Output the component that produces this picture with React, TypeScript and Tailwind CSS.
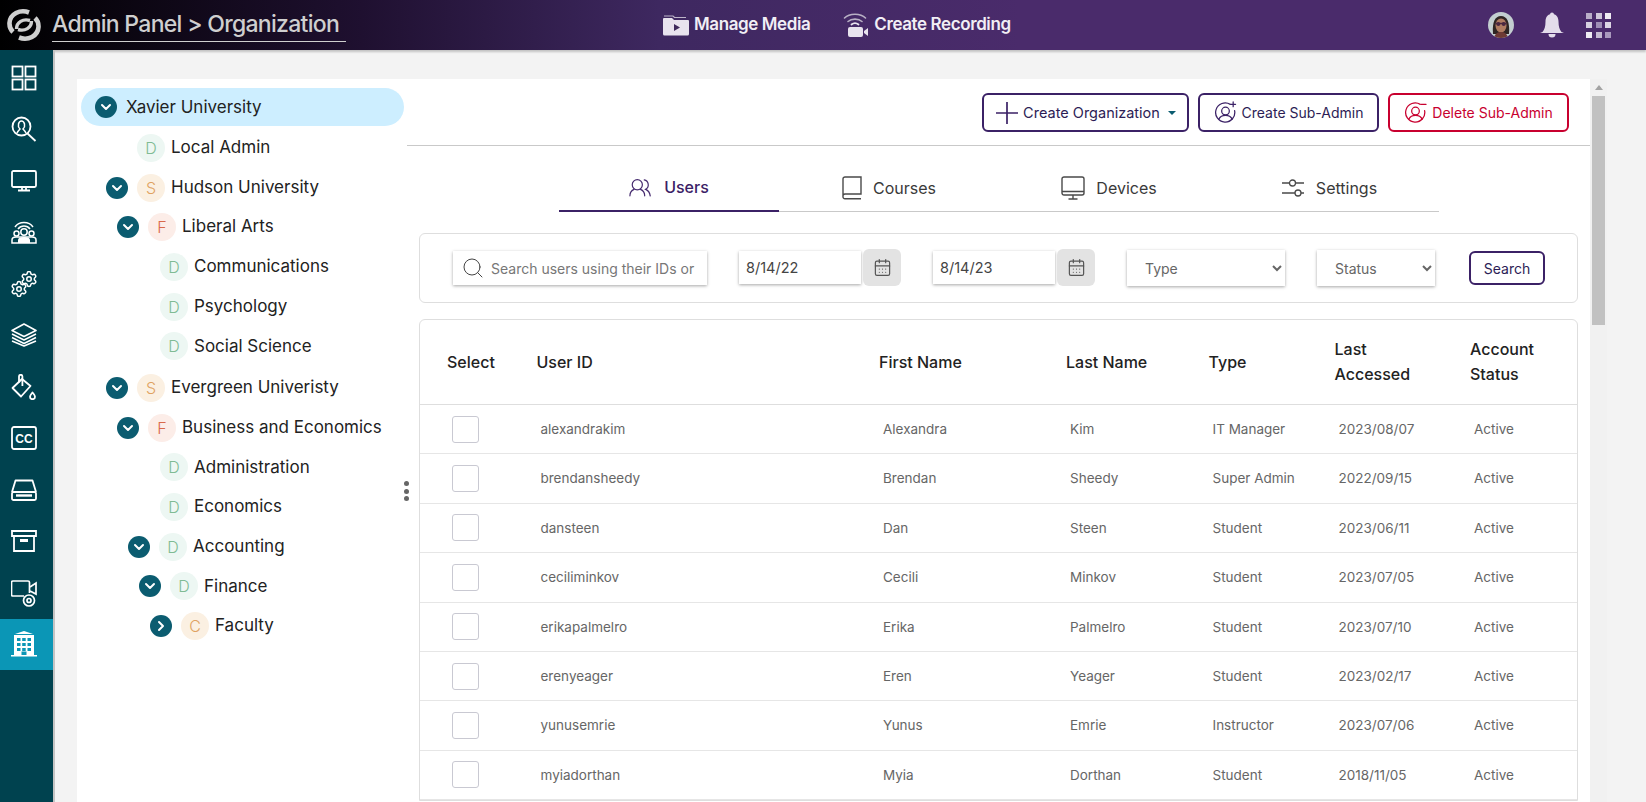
import { CalendarDays, ChevronDown, ChevronRight, Search, Settings } from "lucide-react";

const FONT = "font-['Inter','Liberation_Sans',sans-serif]";

type TreeRow = {
  label: string;
  letter: string;
  pad: string;
  toggle?: "down" | "right";
  extra?: string;
};

const TREE: TreeRow[] = [
  { label: "Local Admin", letter: "D", pad: "pl-[60px]" },
  { label: "Hudson University", letter: "S", pad: "pl-[29px]", toggle: "down" },
  { label: "Liberal Arts", letter: "F", pad: "pl-[40px]", toggle: "down" },
  { label: "Communications", letter: "D", pad: "pl-[83px]" },
  { label: "Psychology", letter: "D", pad: "pl-[83px]" },
  { label: "Social Science", letter: "D", pad: "pl-[83px]" },
  { label: "Evergreen Univeristy", letter: "S", pad: "pl-[29px]", toggle: "down", extra: "mt-[2px]" },
  { label: "Business and Economics", letter: "F", pad: "pl-[40px]", toggle: "down" },
  { label: "Administration", letter: "D", pad: "pl-[83px]" },
  { label: "Economics", letter: "D", pad: "pl-[83px]" },
  { label: "Accounting", letter: "D", pad: "pl-[51px]", toggle: "down" },
  { label: "Finance", letter: "D", pad: "pl-[62px]", toggle: "down" },
  { label: "Faculty", letter: "C", pad: "pl-[73px]", toggle: "right" },
];

const AVATAR_COLORS: Record<string, string> = {
  D: "bg-[#edf7f3] text-[#7fbb94]",
  S: "bg-[#fbf0e2] text-[#e0a261]",
  F: "bg-[#fcede8] text-[#d9694a]",
  C: "bg-[#fbf0e2] text-[#e0a261]",
};

const USERS = [
  ["alexandrakim", "Alexandra", "Kim", "IT Manager", "2023/08/07"],
  ["brendansheedy", "Brendan", "Sheedy", "Super Admin", "2022/09/15"],
  ["dansteen", "Dan", "Steen", "Student", "2023/06/11"],
  ["ceciliminkov", "Cecili", "Minkov", "Student", "2023/07/05"],
  ["erikapalmelro", "Erika", "Palmelro", "Student", "2023/07/10"],
  ["erenyeager", "Eren", "Yeager", "Student", "2023/02/17"],
  ["yunusemrie", "Yunus", "Emrie", "Instructor", "2023/07/06"],
  ["myiadorthan", "Myia", "Dorthan", "Student", "2018/11/05"],
];

const GRID_COLS = "grid grid-cols-[89.5px_342.5px_187px_142.5px_126px_135.5px_1fr] pl-[27px]";

function Toggle({ dir }: { dir: "down" | "right" }) {
  return (
    <span className="flex h-[22px] w-[22px] shrink-0 items-center justify-center rounded-full bg-[#0b5c70] text-white">
      {dir === "down" ? (
        <ChevronDown className="h-4 w-4" strokeWidth={3} />
      ) : (
        <ChevronRight className="h-4 w-4" strokeWidth={3} />
      )}
    </span>
  );
}

function Logo() {
  return (
    <svg viewBox="0 0 34 34" className="h-[34px] w-[34px]" fill="none" stroke="#cfcfcf" strokeLinecap="butt">
      <path d="M22 4.500C13 1 3 6 2.500 15C2.300 19 3.800 22 6 24" strokeWidth="4.600" />
      <path d="M12 29.500C21 33 31 28 31.500 19C31.700 15 30.200 12 28 10" strokeWidth="4.600" />
      <path d="M9.500 21C9.500 14 16 10.500 23 12.500" strokeWidth="3.400" />
      <path d="M24.500 13C24.500 20 18 23.500 11 21.500" strokeWidth="3.400" />
    </svg>
  );
}

function MediaIcon() {
  return (
    <svg viewBox="0 0 28 24" className="h-6 w-7">
      <path d="M2 3h9l1.500 1.500H24" fill="none" stroke="#bdb5c9" strokeWidth="1.200" />
      <path d="M1 6a1 1 0 0 1 1-1h8l2 2h14a1 1 0 0 1 1 1v13a1.500 1.500 0 0 1-1.500 1.500h-23A1.500 1.500 0 0 1 1 21z" fill="#e8e3ee" />
      <path d="M12 11l6 3.500-6 3.500z" fill="#3f2a5c" />
    </svg>
  );
}

function RecordIcon() {
  return (
    <svg viewBox="0 0 26 26" className="h-[26px] w-[26px]">
      <g fill="none" stroke="#b9b1c5" strokeWidth="1.600" strokeLinecap="round">
        <path d="M1.500 6C6.500 1 17.500 1 22.500 6" />
        <path d="M5 9.500c3.500-3.200 10.500-3.200 14 0" />
      </g>
      <path d="M8.500 12.500c2-1.500 5-1.500 7 0" fill="none" stroke="#e8e3ee" strokeWidth="1.800" strokeLinecap="round" />
      <rect x="5" y="15" width="15" height="10" rx="2" fill="#e8e3ee" />
      <path d="M21 19l4-3v8l-4-3z" fill="#e8e3ee" />
    </svg>
  );
}

function Portrait() {
  return (
    <svg viewBox="0 0 26 26" className="h-[26px] w-[26px] rounded-full">
      <rect width="26" height="26" fill="#c3ced0" />
      <path d="M5 22c-1-12 2-18 8-18s9 6 8 18z" fill="#2f2523" />
      <ellipse cx="13" cy="13.500" rx="5.500" ry="7" fill="#b07c62" />
      <path d="M6 26c1-5 4-6 7-6s6 1 7 6z" fill="#6e3a34" />
      <path d="M7.500 11.500h11" stroke="#4a2740" strokeWidth="1.300" />
      <circle cx="10.300" cy="12" r="2" fill="#4a2740" />
      <circle cx="15.700" cy="12" r="2" fill="#4a2740" />
    </svg>
  );
}

function Bell() {
  return (
    <svg viewBox="0 0 26 26" className="h-[26px] w-[26px]" fill="#e3dcea">
      <circle cx="13" cy="2.500" r="2" />
      <path d="M13 2c-4.500 0-6.500 3.500-6.500 7.500 0 5-1 8-3 10.500L1 21h24l-2.500-1c-2-2.500-3-5.500-3-10.500C19.500 5.500 17.500 2 13 2z" />
      <path d="M9.500 22h7a3.500 3.500 0 0 1-7 0z" />
    </svg>
  );
}

function AppsGrid() {
  const shades = ["bg-[#b9aec8]", "bg-[#cfc7da]", "bg-[#efecf3]", "bg-[#d7d1e0]", "bg-[#9f8fb5]", "bg-[#dcd6e4]", "bg-[#efecf3]", "bg-[#c5bbd2]", "bg-[#a999bd]"];
  return (
    <div className="grid grid-cols-3 gap-[3.500px]">
      {shades.map((s, i) => (
        <span key={i} className={`h-[6px] w-[6px] ${s}`} />
      ))}
    </div>
  );
}

function SideIcon({ index }: { index: number }) {
  const common = { fill: "none", stroke: "#fff", strokeWidth: 1.8 };
  switch (index) {
    case 0:
      return (
        <svg viewBox="0 0 26 26" className="h-[26px] w-[26px]" {...common}>
          <rect x="1.500" y="1.500" width="10" height="10" />
          <rect x="14.500" y="1.500" width="10" height="10" />
          <rect x="1.500" y="14.500" width="10" height="10" />
          <rect x="14.500" y="14.500" width="10" height="10" />
        </svg>
      );
    case 1:
      return (
        <svg viewBox="0 0 26 26" className="h-[26px] w-[26px]" {...common}>
          <circle cx="10.500" cy="10.500" r="9" />
          <path d="M16.500 17.500l8 7.500" />
          <path d="M6 17c1-2 2-3 3-4-1.500-1.500-2-3-1.500-5 .5-2 1.500-3 3-3s2.500 1 3 3c.5 2 0 3.500-1.500 5 1 1 2 2 3 4" strokeWidth="1.500" />
        </svg>
      );
    case 2:
      return (
        <svg viewBox="0 0 26 22" className="h-[22px] w-[26px]" {...common}>
          <rect x="1" y="1" width="24" height="16" rx="1.500" />
          <path d="M11 17v3M15 17v3M7 20.500h12" />
        </svg>
      );
    case 3:
      return (
        <svg viewBox="0 0 26 26" className="h-[26px] w-[26px]">
          <g fill="none" stroke="#fff" strokeWidth="1.500">
            <path d="M4 8c4-6 14-6 18 0" />
            <path d="M7 10c3-4 9-4 12 0" />
          </g>
          <circle cx="13" cy="13" r="3.200" fill="none" stroke="#fff" strokeWidth="1.500" />
          <circle cx="5.500" cy="14.500" r="2.500" fill="none" stroke="#fff" strokeWidth="1.500" />
          <circle cx="20.500" cy="14.500" r="2.500" fill="none" stroke="#fff" strokeWidth="1.500" />
          <path d="M1 24v-3c0-2 1.500-3 4-3h16c2.500 0 4 1 4 3v3z" fill="none" stroke="#fff" strokeWidth="1.500" />
          <path d="M7 24v-3c0-2 2-3 6-3s6 1 6 3v3z" fill="#fff" />
        </svg>
      );
    case 4:
      return (
        <svg viewBox="0 0 26 26" className="h-[26px] w-[26px]">
          <Settings x={9} y={-1} width={18} height={18} stroke="#fff" strokeWidth={2} />
          <Settings x={-1} y={9} width={18} height={18} stroke="#fff" strokeWidth={2} />
        </svg>
      );
    case 5:
      return (
        <svg viewBox="0 0 26 24" className="h-[24px] w-[26px]" fill="none" stroke="#fff" strokeWidth="1.600" strokeLinejoin="round">
          <path d="M13 1L25 7.500 13 13.500 1 7.500z" />
          <path d="M1 11l12 6 12-6M1 14.500l12 6 12-6M1 18l12 5 12-5" />
        </svg>
      );
    case 6:
      return (
        <svg viewBox="0 0 26 26" className="h-[26px] w-[26px]" fill="none" stroke="#fff" strokeWidth="1.800" strokeLinejoin="round">
          <path d="M11 5L1.500 14l8.500 8.500L19.500 12z" />
          <path d="M8 8.500V2.500a1.700 1.700 0 0 1 3.400 0V12" />
          <path d="M21.500 18.500c-1.500 2-2.500 3-2.500 4.200a2.500 2.500 0 0 0 5 0c0-1.200-1-2.200-2.500-4.200z" />
        </svg>
      );
    case 7:
      return (
        <svg viewBox="0 0 26 24" className="h-[24px] w-[26px]">
          <rect x="1" y="1" width="24" height="22" rx="2" fill="none" stroke="#fff" strokeWidth="1.800" />
          <text x="13" y="16.500" textAnchor="middle" fontSize="12" fontWeight="800" fill="#fff" fontFamily="Liberation Sans, sans-serif">CC</text>
        </svg>
      );
    case 8:
      return (
        <svg viewBox="0 0 26 22" className="h-[22px] w-[26px]" fill="none" stroke="#fff" strokeWidth="1.800" strokeLinejoin="round">
          <path d="M1 13L4.500 1.500h17L25 13" />
          <rect x="1" y="13" width="24" height="8" rx="1.500" />
          <path d="M5 16.500h16" strokeWidth="2.400" />
        </svg>
      );
    case 9:
      return (
        <svg viewBox="0 0 26 22" className="h-[22px] w-[26px]" fill="none" stroke="#fff" strokeWidth="1.800">
          <path d="M1 1h24v5H1zM3 6v15h20V6" />
          <path d="M9 10.500h8" strokeWidth="3" />
        </svg>
      );
    case 10:
      return (
        <svg viewBox="0 0 26 28" className="h-[28px] w-[26px]" fill="none" stroke="#fff" strokeWidth="1.700">
          <path d="M13 17H2a1.500 1.500 0 0 1-1.500-1.500v-12A1.500 1.500 0 0 1 2 2h15a1.500 1.500 0 0 1 1.500 1.500V14" />
          <path d="M19 8l6-4v11l-6-3" />
          <circle cx="18" cy="21.500" r="5.500" />
          <circle cx="18" cy="21.500" r="2" />
        </svg>
      );
    default:
      return (
        <svg viewBox="0 0 26 26" className="h-[26px] w-[26px]" fill="#fff">
          <path d="M13 0l9 3H4z" />
          <rect x="3" y="4" width="20" height="20" />
          <rect y="24" width="26" height="1.500" />
          <g fill="#0b96b6">
            {[7, 12, 17].map((y) =>
              [6, 11.2, 16.5].map((x) => <rect key={`${x}-${y}`} x={x} y={y} width="3.500" height="3" />)
            )}
            <rect x="10.500" y="20.500" width="5" height="3.500" />
          </g>
        </svg>
      );
  }
}

function PersonIcon({ color, sign }: { color: string; sign: "plus" | "minus" }) {
  return (
    <svg viewBox="0 0 24 24" className="h-[23px] w-[23px]" fill="none" stroke={color} strokeWidth="1.300" strokeLinecap="round">
      <path d="M17 3.500A10 10 0 1 0 21.500 10" />
      <circle cx="12" cy="10.500" r="4" />
      <path d="M5 19c1.500-3 4-4 7-4s5.500 1 7 4" />
      {sign === "plus" ? <path d="M20 1v5M17.500 3.500h5" /> : <path d="M18 3.500h5" />}
    </svg>
  );
}

function TabIcon({ index }: { index: number }) {
  if (index === 0) {
    return (
      <svg viewBox="0 0 26 20" className="h-[19px] w-[24px]" fill="none" stroke="#452a6e" strokeWidth="1.300" strokeLinecap="round">
        <circle cx="9" cy="7" r="5.500" />
        <path d="M1 19c0-3.500 2-6 4.500-7M17 19c0-3.500-2-6-4.500-7" />
        <path d="M16.500 1.800a5.500 5.500 0 0 1 1.500 10.200c2.500 1 4.500 3.500 5 7" />
      </svg>
    );
  }
  if (index === 1) {
    return (
      <svg viewBox="0 0 20 24" className="h-6 w-5" fill="none" stroke="#4a4a4a" strokeWidth="1.400">
        <path d="M1 21V3a2 2 0 0 1 2-2h16v17H3a2 2 0 0 0-2 2.500A2 2 0 0 0 3 22.800h16" />
      </svg>
    );
  }
  if (index === 2) {
    return (
      <svg viewBox="0 0 24 24" className="h-6 w-6" fill="none" stroke="#4a4a4a" strokeWidth="1.400">
        <rect x="1" y="1" width="22" height="18" rx="2" />
        <path d="M1 15.500h22M12 19v3.500M7.500 23h9" />
      </svg>
    );
  }
  return (
    <svg viewBox="0 0 24 20" className="h-5 w-6" fill="none" stroke="#4a4a4a" strokeWidth="1.300">
      <path d="M1 5h7M15 5h8M1 15h13M20 15h3" />
      <circle cx="11.500" cy="5" r="3" />
      <circle cx="17" cy="15" r="3" />
    </svg>
  );
}

const TABS = [
  { label: "Users", active: true },
  { label: "Courses" },
  { label: "Devices" },
  { label: "Settings" },
];

function DateField({ value }: { value: string }) {
  return (
    <div className="-mt-[2px] flex items-center gap-[2px]">
      <input
        readOnly
        value={value}
        className="h-[33px] w-[122px] bg-white pl-[7px] text-[14.5px] text-[#444] shadow-[0_1px_3px_rgba(0,0,0,0.35)] outline-none"
      />
      <span className="flex h-[37px] w-[38px] items-center justify-center rounded-md bg-[#e3e3e3]">
        <CalendarDays className="h-[19px] w-[19px] text-[#555]" strokeWidth={1.5} />
      </span>
    </div>
  );
}

export default function App() {
  return (
    <div className={`flex h-screen flex-col overflow-hidden bg-[#f3f3f3] ${FONT}`}>
      <header className="flex h-[50px] shrink-0 items-center bg-[linear-gradient(90deg,#000_0%,#1f1030_22%,#3e2860_40%,#4a2b6b_62%,#4a2b6b_100%)] shadow-[0_2px_2px_rgba(0,0,0,0.2)]">
        <div className="flex w-[662px] shrink-0 items-center pl-[7px]">
          <Logo />
          <span className="ml-[11px] whitespace-nowrap border-b border-[#cfcfcf] pr-[7px] text-[23px] leading-[33px] font-medium tracking-[-0.7px] text-[#cfcfcf]">
            Admin Panel &gt; Organization
          </span>
        </div>
        <div className="flex items-center">
          <MediaIcon />
          <span className="ml-[4px] text-[17px] font-semibold tracking-[-0.4px] text-[#f1eef5]">Manage Media</span>
          <span className="ml-[33px]"><RecordIcon /></span>
          <span className="ml-[5px] text-[17px] font-semibold tracking-[-0.4px] text-[#f1eef5]">Create Recording</span>
        </div>
        <div className="ml-auto flex items-center pr-[35px]">
          <Portrait />
          <span className="ml-[25px]"><Bell /></span>
          <span className="ml-[21px]"><AppsGrid /></span>
        </div>
      </header>

      <div className="flex min-h-0 flex-1">
        <nav className="flex w-[55px] shrink-0 flex-col border-r-2 border-[#c4c4c4] bg-[#00424f] pt-[2px]">
          {Array.from({ length: 12 }).map((_, i) => (
            <div
              key={i}
              className={`flex h-[51.500px] shrink-0 items-center justify-center pr-[6px] ${i === 11 ? "bg-[#0b96b6]" : ""}`}
            >
              <SideIcon index={i} />
            </div>
          ))}
        </nav>

        <main className="flex min-w-0 flex-1 pt-[29px] pl-[22px]">
          <div className="flex w-[1513px] shrink-0 bg-white">
            <aside className="relative w-[330px] shrink-0 pt-[9px]">
              <div className="mr-[3px] ml-[4px] flex h-[38px] items-center gap-[9px] rounded-full bg-[#cdeeff] pl-[14px] text-[17px] text-[#222]">
                <Toggle dir="down" />
                <span className="pt-[2px]">Xavier University</span>
              </div>
              <div className="mt-[2px]">
                {TREE.map((row) => (
                  <div key={row.label} className={`flex h-[39.700px] items-center whitespace-nowrap ${row.pad} ${row.extra ?? ""}`}>
                    {row.toggle && (
                      <span className="mr-[9px]">
                        <Toggle dir={row.toggle} />
                      </span>
                    )}
                    <span className={`flex h-[28px] w-[28px] shrink-0 items-center justify-center rounded-full text-[16px] font-light ${AVATAR_COLORS[row.letter]}`}>
                      {row.letter}
                    </span>
                    <span className="ml-[6px] text-[17px] text-[#222]">{row.label}</span>
                  </div>
                ))}
              </div>
              <div className="absolute top-[402px] right-[-2px] flex flex-col gap-[2.500px]">
                <span className="h-[5px] w-[5px] rounded-full bg-[#666]" />
                <span className="h-[5px] w-[5px] rounded-full bg-[#666]" />
                <span className="h-[5px] w-[5px] rounded-full bg-[#666]" />
              </div>
            </aside>

            <section className="min-w-0 flex-1">
              <div className="flex h-[67px] items-start justify-end gap-[9px] border-b border-[#c9c9c9] pt-[14px] pr-[21px]">
                <button className="flex h-[39px] w-[207px] items-center justify-center rounded-md border-2 border-[#3b2166] text-[14.500px] text-[#2c1d55]">
                  <svg viewBox="0 0 24 24" className="mr-[4px] h-[24px] w-[24px]" fill="none" stroke="#3b2166" strokeWidth="1.700">
                    <path d="M12 1v22M1 12h22" />
                  </svg>
                  Create Organization
                  <span className="ml-[8px] h-0 w-0 border-x-[4px] border-t-[4px] border-x-transparent border-t-[#0b5c70]" />
                </button>
                <button className="flex h-[39px] w-[181px] items-center justify-center gap-[5px] rounded-md border-2 border-[#3b2166] text-[14px] text-[#2c1d55]">
                  <PersonIcon color="#3b2166" sign="plus" />
                  Create Sub-Admin
                </button>
                <button className="flex h-[39px] w-[181px] items-center justify-center gap-[5px] rounded-md border-2 border-[#c8002f] text-[14px] text-[#c8002f]">
                  <PersonIcon color="#c8002f" sign="minus" />
                  Delete Sub-Admin
                </button>
              </div>

              <div className="ml-[152px] grid h-[66px] w-[880px] grid-cols-4 border-b border-[#c9c9c9]">
                {TABS.map((tab, i) => (
                  <div
                    key={tab.label}
                    className={`-mb-px flex items-center justify-center gap-[11px] pt-[18px] text-[16px] ${tab.active ? "border-b-2 border-[#3b2166] font-medium text-[#3b2166]" : "text-[#3a3a3a]"}`}
                  >
                    <TabIcon index={i} />
                    {tab.label}
                  </div>
                ))}
              </div>

              <div className="mx-[12px] mt-[21px] flex h-[70px] items-center rounded-md border border-[#dedede] pr-[32px] pl-[33px]">
                <div className="flex h-[34px] w-[254px] items-center bg-white pl-[8px] shadow-[0_1px_3px_rgba(0,0,0,0.35)]">
                  <Search className="h-[24px] w-[24px] text-[#444]" strokeWidth={1} />
                  <input
                    readOnly
                    placeholder="Search users using their IDs or names"
                    className="ml-[6px] w-[204px] bg-transparent text-[14px] outline-none placeholder:text-[#777]"
                  />
                </div>
                <div className="ml-[32px]"><DateField value="8/14/22" /></div>
                <div className="ml-[32px]"><DateField value="8/14/23" /></div>
                <select className="ml-[32px] h-[36px] w-[158px] bg-white pl-[14px] text-[14px] text-[#666] shadow-[0_1px_3px_rgba(0,0,0,0.35)] outline-none">
                  <option>Type</option>
                </select>
                <select className="ml-[32px] h-[36px] w-[118px] bg-white pl-[14px] text-[14px] text-[#666] shadow-[0_1px_3px_rgba(0,0,0,0.35)] outline-none">
                  <option>Status</option>
                </select>
                <button className="ml-[34px] h-[34px] w-[76px] rounded-md border-2 border-[#3b2166] text-[14px] text-[#2c1d55]">
                  Search
                </button>
              </div>

              <div className="mx-[12px] mt-[16px] rounded-t-md border border-[#dedede]">
                <div className={`${GRID_COLS} h-[85px] items-center border-b border-[#dedede] text-[16px] leading-[25px] font-medium text-[#222]`}>
                  <span>Select</span>
                  <span>User ID</span>
                  <span>First Name</span>
                  <span>Last Name</span>
                  <span>Type</span>
                  <span>Last<br />Accessed</span>
                  <span>Account<br />Status</span>
                </div>
                {USERS.map((u) => (
                  <div key={u[0]} className={`${GRID_COLS} h-[49.400px] items-center border-b border-[#e6e6e6] text-[13.500px] text-[#666]`}>
                    <span className="ml-[5px] h-[27px] w-[27px] rounded-[3px] border border-[#c9c9d2] bg-white" />
                    {u.map((cell) => (
                      <span key={cell} className="pl-[4px]">{cell}</span>
                    ))}
                    <span className="pl-[4px]">Active</span>
                  </div>
                ))}
              </div>
            </section>
          </div>

          <div className="flex w-[17px] shrink-0 flex-col items-center bg-[#f1f1f1]">
            <div className="flex h-[17px] items-center justify-center">
              <span className="h-0 w-0 border-x-[4px] border-b-[5px] border-x-transparent border-b-[#a3a3a3]" />
            </div>
            <div className="h-[229px] w-[13px] bg-[#c1c1c1]" />
          </div>
        </main>
      </div>
    </div>
  );
}
